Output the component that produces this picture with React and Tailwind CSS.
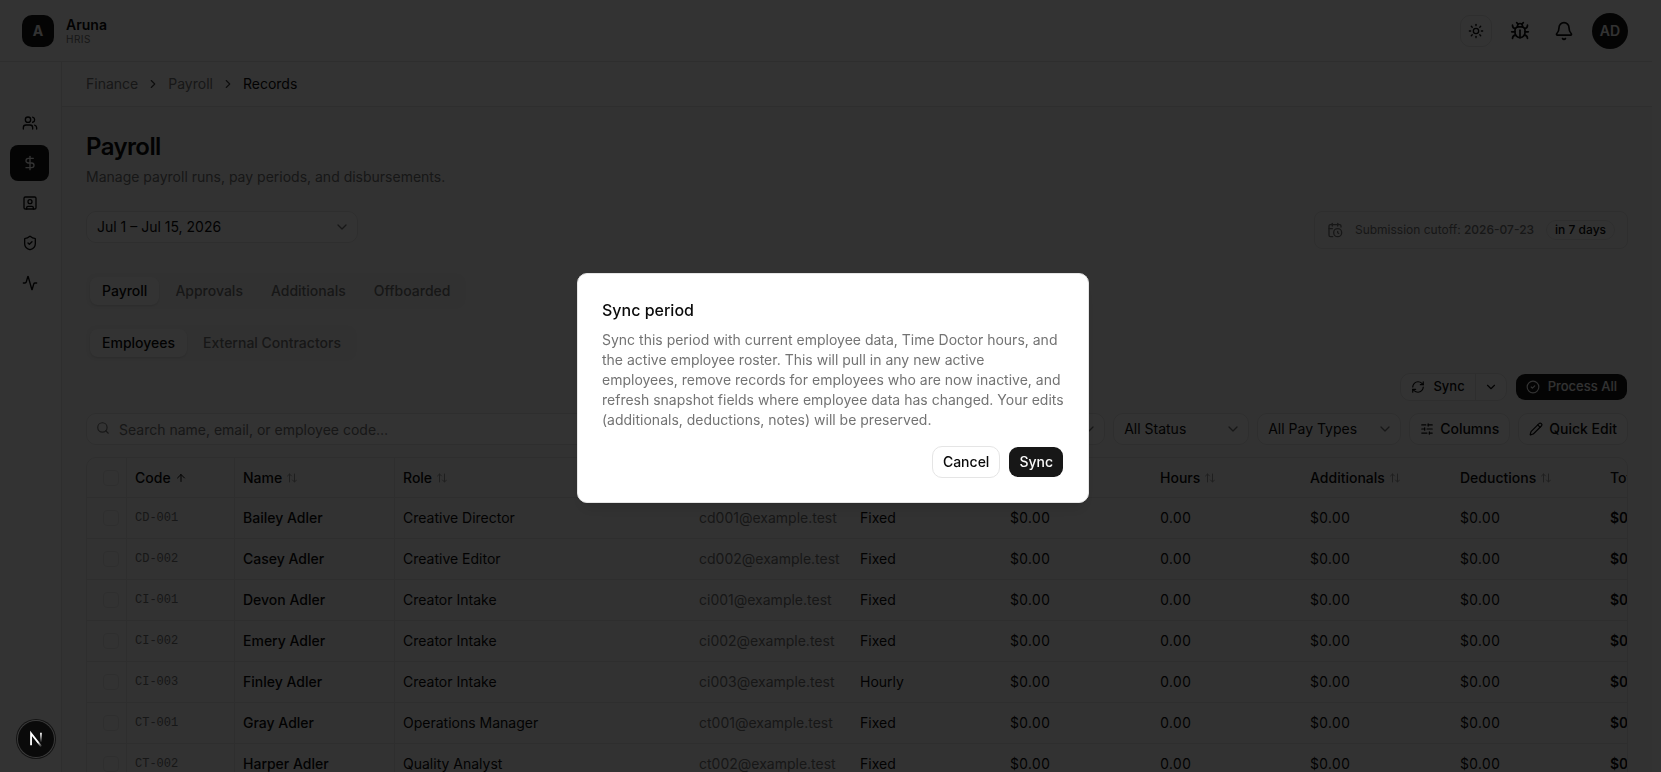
import React from "react";
import {
  Activity,
  ArrowUp,
  ArrowUpDown,
  Bell,
  Bug,
  CalendarClock,
  ChevronDown,
  ChevronRight,
  CircleCheck,
  DollarSign,
  Pencil,
  RefreshCw,
  Search,
  ShieldCheck,
  SlidersHorizontal,
  SquareUser,
  Sun,
  Users,
} from "lucide-react";

const NAV = [
  { label: "Employees", icon: Users },
  { label: "Payroll", icon: DollarSign, active: true },
  { label: "Directory", icon: SquareUser },
  { label: "Access", icon: ShieldCheck },
  { label: "Activity", icon: Activity },
];

const ROWS = [
  { code: "CD-001", name: "Bailey Adler", role: "Creative Director", type: "Fixed" },
  { code: "CD-002", name: "Casey Adler", role: "Creative Editor", type: "Fixed" },
  { code: "CI-001", name: "Devon Adler", role: "Creator Intake", type: "Fixed" },
  { code: "CI-002", name: "Emery Adler", role: "Creator Intake", type: "Fixed" },
  { code: "CI-003", name: "Finley Adler", role: "Creator Intake", type: "Hourly" },
  { code: "CT-001", name: "Gray Adler", role: "Operations Manager", type: "Fixed" },
  { code: "CT-002", name: "Harper Adler", role: "Quality Analyst", type: "Fixed" },
];

const SortHead = ({ children, className = "", sorted }) => (
  <th className={`h-10 px-2 text-left font-medium ${className}`}>
    <button type="button" className="flex items-center gap-1 font-medium">
      {children}
      {sorted ? (
        <ArrowUp className="size-3" />
      ) : (
        <ArrowUpDown className="size-3 opacity-40" />
      )}
    </button>
  </th>
);

const Select = ({ label, value, className = "" }) => (
  <div className={`relative ${className}`}>
    <select
      aria-label={label}
      className="h-8 w-full appearance-none rounded-[10px] border border-neutral-200 bg-white pr-8 pl-[10px] text-sm"
    >
      <option>{value}</option>
    </select>
    <ChevronDown className="pointer-events-none absolute top-2 right-2 size-4 text-neutral-500" />
  </div>
);

const Tabs = ({ items }) => (
  <div role="tablist" className="flex w-fit gap-1 rounded-[10px] bg-neutral-100 p-1">
    {items.map((item, i) => (
      <button
        key={item}
        type="button"
        role="tab"
        aria-selected={i === 0}
        className={`h-7 rounded-lg px-3 text-sm font-medium ${
          i === 0 ? "bg-white shadow-sm" : "text-neutral-500"
        }`}
      >
        {item}
      </button>
    ))}
  </div>
);

const Header = () => (
  <header className="flex h-[62px] shrink-0 items-center justify-between border-b border-neutral-200 pr-6 pl-[22px]">
    <div className="flex items-center gap-3">
      <div className="flex size-8 items-center justify-center rounded-[10px] bg-neutral-900 text-sm font-bold text-neutral-50">
        A
      </div>
      <div>
        <p className="text-sm leading-4 font-semibold">Aruna</p>
        <p className="text-[10px] leading-3 tracking-wider text-neutral-500">HRIS</p>
      </div>
    </div>
    <div className="flex items-center gap-3">
      <button
        type="button"
        aria-label="Toggle theme"
        className="flex size-8 items-center justify-center rounded-[10px] border border-neutral-200"
      >
        <Sun className="size-4" />
      </button>
      <button type="button" aria-label="Report a bug" className="flex size-8 items-center justify-center">
        <Bug className="size-5" />
      </button>
      <button type="button" aria-label="Notifications" className="flex size-8 items-center justify-center">
        <Bell className="size-5" />
      </button>
      <button
        type="button"
        aria-label="Account"
        className="size-9 rounded-full bg-neutral-900 text-sm font-semibold text-neutral-50"
      >
        AD
      </button>
    </div>
  </header>
);

const Sidebar = () => (
  <nav className="flex w-[62px] shrink-0 flex-col gap-1 border-r border-neutral-200 pt-[43px] pr-3 pl-[10px]">
    {NAV.map(({ label, icon: Icon, active }) => (
      <a
        key={label}
        href="#"
        aria-label={label}
        className={`flex h-9 items-center justify-center rounded-lg ${
          active ? "bg-neutral-900 text-neutral-50" : ""
        }`}
      >
        <Icon className="size-4" />
      </a>
    ))}
  </nav>
);

const Breadcrumb = () => (
  <div className="flex h-[45px] items-center gap-2 border-b border-neutral-200 bg-white px-6 text-sm text-neutral-500">
    <a href="#">Finance</a>
    <ChevronRight className="size-[14px] text-neutral-700" />
    <a href="#">Payroll</a>
    <ChevronRight className="size-[14px] text-neutral-700" />
    <span className="text-neutral-950">Records</span>
  </div>
);

const PayrollTable = () => (
  <div className="overflow-hidden rounded-[10px] border border-neutral-200">
    <table className="w-[1675px] table-fixed border-separate border-spacing-0 text-sm [&_td]:border-b [&_td]:border-neutral-200 [&_th]:border-b [&_th]:border-neutral-200">
      <thead>
        <tr>
          <th className="w-10 border-r pr-2 pl-4">
            <input
              type="checkbox"
              aria-label="Select all"
              className="block size-4 appearance-none rounded-sm border border-neutral-200"
            />
          </th>
          <SortHead className="w-[108px] border-r" sorted>Code</SortHead>
          <SortHead className="w-40 border-r">Name</SortHead>
          <SortHead className="w-74">Role</SortHead>
          <SortHead className="w-[161px]">Email</SortHead>
          <SortHead className="w-[150px]">Pay Type</SortHead>
          <SortHead className="w-[150px]">Base Pay</SortHead>
          <SortHead className="w-[150px]">Hours</SortHead>
          <SortHead className="w-[150px]">Additionals</SortHead>
          <SortHead className="w-[150px]">Deductions</SortHead>
          <SortHead className="w-40">Total</SortHead>
        </tr>
      </thead>
      <tbody>
        {ROWS.map((row) => (
          <tr key={row.code}>
            <td className="h-[41px] border-r pr-2 pl-4">
              <input
                type="checkbox"
                aria-label={`Select ${row.name}`}
                className="block size-4 appearance-none rounded-sm border border-neutral-200"
              />
            </td>
            <td className="border-r px-2 font-['Liberation_Mono',monospace] text-xs text-neutral-500">
              {row.code}
            </td>
            <td className="border-r px-2 font-medium">{row.name}</td>
            <td className="px-2">{row.role}</td>
            <td className="px-2 text-neutral-500">
              {row.code.toLowerCase().replace("-", "")}@example.test
            </td>
            <td className="px-2">{row.type}</td>
            <td className="px-2 tabular-nums">$0.00</td>
            <td className="px-2 tabular-nums">0.00</td>
            <td className="px-2 tabular-nums">$0.00</td>
            <td className="px-2 tabular-nums">$0.00</td>
            <td className="px-2 font-semibold tabular-nums">$0.00</td>
          </tr>
        ))}
      </tbody>
    </table>
  </div>
);

const SyncDialog = () => (
  <div className="fixed inset-0 flex items-center justify-center bg-black/80 pt-1 pl-[5px]">
    <div
      role="alertdialog"
      aria-labelledby="sync-title"
      aria-describedby="sync-text"
      className="w-full max-w-lg rounded-[10px] border border-neutral-200 bg-white p-6 shadow-lg"
    >
      <h2 id="sync-title" className="text-base font-medium">Sync period</h2>
      <p id="sync-text" className="mt-2 text-sm text-neutral-500">
        Sync this period with current employee data, Time Doctor hours, and the active
        employee roster. This will pull in any new active employees, remove records for
        employees who are now inactive, and refresh snapshot fields where employee data has
        changed. Your edits (additionals, deductions, notes) will be preserved.
      </p>
      <div className="mt-4 flex justify-end gap-2">
        <button type="button" className="h-8 rounded-[10px] border border-neutral-200 px-[10px] text-sm font-medium">
          Cancel
        </button>
        <button
          type="button"
          className="h-8 rounded-[10px] border border-transparent bg-neutral-900 bg-clip-padding px-[10px] text-sm font-medium text-neutral-50"
        >
          Sync
        </button>
      </div>
    </div>
  </div>
);

const DevBadge = () => (
  <button
    type="button"
    aria-label="Open dev tools"
    className="fixed bottom-[15px] left-[18px] flex size-9 items-center justify-center rounded-full bg-[#0a0a0a] shadow-[0_0_0_1px_#3c3c3c,0_0_0_2px_#141414]"
  >
    <svg viewBox="0 0 40 40" className="size-9" fill="none">
      <defs>
        <linearGradient id="diag" x1="16" y1="16" x2="27" y2="28" gradientUnits="userSpaceOnUse">
          <stop offset="0.6" stopColor="#fff" />
          <stop offset="1" stopColor="#fff" stopOpacity="0" />
        </linearGradient>
        <linearGradient id="stem" x1="25" y1="13" x2="25" y2="24" gradientUnits="userSpaceOnUse">
          <stop stopColor="#fff" />
          <stop offset="1" stopColor="#fff" stopOpacity="0" />
        </linearGradient>
      </defs>
      <path d="M14.5 27V13.8L26 28.5" stroke="url(#diag)" strokeWidth="2" />
      <path d="M25.5 13v11" stroke="url(#stem)" strokeWidth="2" />
    </svg>
  </button>
);

export default function App() {
  return (
    <div className="h-screen overflow-hidden bg-white font-['Inter',sans-serif] text-neutral-950">
      <div className="flex h-full flex-col pr-[9px]">
        <Header />
        <div className="flex min-h-0 grow">
          <Sidebar />
          <main className="min-w-0 grow bg-neutral-50">
            <Breadcrumb />
            <div className="px-6 pt-6">
              <h1 className="text-2xl font-semibold tracking-tight">Payroll</h1>
              <p className="mt-1 text-sm text-neutral-500">
                Manage payroll runs, pay periods, and disbursements.
              </p>
              <div className="mt-6 flex items-start justify-between">
                <Select label="Pay period" value="Jul 1 – Jul 15, 2026" className="w-68" />
                <div className="flex h-[38px] items-center gap-3 rounded-lg border border-neutral-200 px-3 text-xs text-neutral-500">
                  <CalendarClock className="size-4" />
                  <span>
                    Submission cutoff: <span className="font-medium">2026-07-23</span>
                  </span>
                  <span className="flex h-5 items-center rounded-full border border-neutral-200 px-2 font-medium text-neutral-950">
                    in 7 days
                  </span>
                </div>
              </div>
              <div className="mt-6">
                <Tabs items={["Payroll", "Approvals", "Additionals", "Offboarded"]} />
              </div>
              <div className="mt-4">
                <Tabs items={["Employees", "External Contractors"]} />
              </div>
              <div className="mt-3 flex justify-end gap-2 text-[13px] font-medium">
                <div className="flex h-7 rounded-[10px] border border-neutral-200 bg-white">
                  <button type="button" className="flex items-center gap-2 border-r border-neutral-200 px-[10px]">
                    <RefreshCw className="size-[14px]" />
                    Sync
                  </button>
                  <button type="button" aria-label="More sync options" className="px-2">
                    <ChevronDown className="size-[14px]" />
                  </button>
                </div>
                <button
                  type="button"
                  className="flex h-7 items-center gap-2 rounded-[10px] border border-transparent bg-neutral-900 bg-clip-padding px-[10px] text-neutral-50"
                >
                  <CircleCheck className="size-[14px]" />
                  Process All
                </button>
              </div>
              <div className="mt-3 flex gap-2 text-sm">
                <div className="relative grow">
                  <Search className="absolute top-2 left-[10px] size-[14px] text-neutral-500" />
                  <input
                    type="text"
                    aria-label="Search employees"
                    placeholder="Search name, email, or employee code…"
                    className="h-8 w-full rounded-[10px] border border-neutral-200 bg-white pr-3 pl-8 placeholder:text-neutral-500"
                  />
                </div>
                <Select label="Department" value="All Roles" className="w-36" />
                <Select label="Status" value="All Status" className="w-[136px]" />
                <Select label="Pay type" value="All Pay Types" className="w-36" />
                <button
                  type="button"
                  className="flex h-8 items-center gap-[6px] rounded-[10px] border border-neutral-200 bg-white px-[10px] font-medium"
                >
                  <SlidersHorizontal className="size-[14px]" />
                  Columns
                </button>
                <button
                  type="button"
                  className="flex h-8 items-center gap-[6px] rounded-[10px] border border-neutral-200 bg-white px-[10px] font-medium"
                >
                  <Pencil className="size-[14px]" />
                  Quick Edit
                </button>
              </div>
              <div className="mt-3">
                <PayrollTable />
              </div>
            </div>
          </main>
        </div>
      </div>
      <SyncDialog />
      <DevBadge />
    </div>
  );
}
